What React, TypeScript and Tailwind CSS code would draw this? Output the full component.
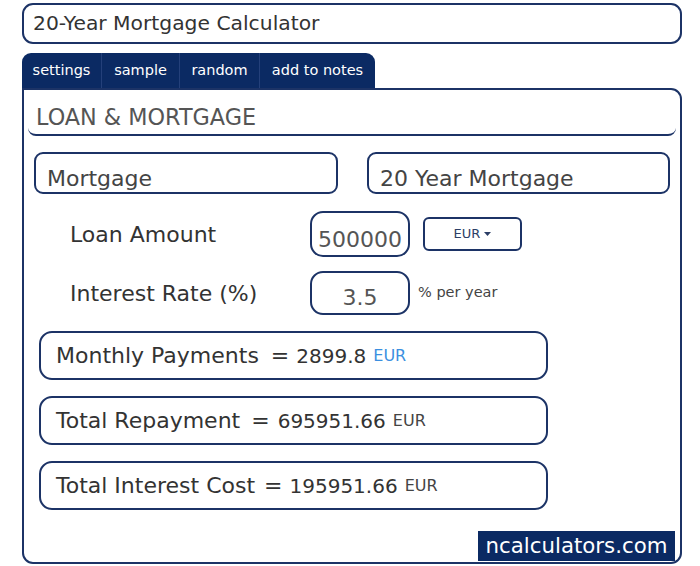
import React from "react";

const navy = "border-[#1c3366]";

function Result({ label, value, eurClass, gap }: { label: string; value: string; eurClass: string; gap: string }) {
  return (
    <div className={`w-[509px] h-[49px] border-2 ${navy} rounded-[13px] flex items-center pl-[15px] text-[22px] text-[#333]`}>
      <span>{label}</span>
      <span className={gap}>=</span>
      <span className="text-[20px]">{value}</span>
      <span className={`ml-[7px] text-[16px] ${eurClass}`}>EUR</span>
    </div>
  );
}

export default function App() {
  return (
    <div className="w-[700px] h-[566px] bg-white pt-[3px] pl-[22px] font-['DejaVu_Sans',sans-serif] text-[#444]">
      <div className={`w-[660px] h-[41px] border-2 ${navy} rounded-[11px] flex items-center pl-[9px] text-[20.3px] text-[#333]`}>
        20-Year Mortgage Calculator
      </div>
      <div className="mt-[9px] w-[353px] h-[35px] bg-[#0b2a63] rounded-t-[9px] flex text-white text-[14.5px]">
        <span className="w-[80px] border-r border-[#24407a] flex items-center justify-center">settings</span>
        <span className="w-[78px] border-r border-[#24407a] flex items-center justify-center">sample</span>
        <span className="w-[80px] border-r border-[#24407a] flex items-center justify-center">random</span>
        <span className="w-[115px] flex items-center justify-center">add to notes</span>
      </div>
      <div className={`w-[660px] h-[476px] border-2 ${navy} rounded-b-[11px] rounded-tr-[11px] px-[4px] pt-[14px] flex flex-col`}>
        <div className={`border-b-2 ${navy} rounded-b-[8px] w-[648px] pl-[8px] pb-[3px] text-[22.3px] text-[#555] leading-[27px]`}>LOAN &amp; MORTGAGE</div>
        <div className="flex mt-[16px] pl-[6px] gap-[29px]">
          <div className={`w-[304px] h-[42px] border-2 ${navy} rounded-[9px] flex items-end pl-[11px] text-[22px] leading-[27px] text-[#444]`}>Mortgage</div>
          <div className={`w-[303px] h-[42px] border-2 ${navy} rounded-[9px] flex items-end pl-[11px] text-[22px] leading-[27px] text-[#444]`}>20 Year Mortgage</div>
        </div>
        <div className="flex items-center mt-[17px]">
          <div className="w-[282px] pl-[42px] text-[22px] text-[#333]">Loan Amount</div>
          <div className={`w-[100px] h-[46px] border-2 ${navy} rounded-[13px] flex items-end justify-center text-[22px] leading-[30px] text-[#555]`}>500000</div>
          <div className={`ml-[13px] w-[99px] h-[34px] border-2 ${navy} rounded-[6px] flex items-center justify-center text-[13px] text-[#2c3e66]`}>
            EUR
            <svg width="7" height="4" viewBox="0 0 7 4" className="ml-[4px]"><path d="M0 0h7L3.5 4z" fill="#2c3e66" /></svg>
          </div>
        </div>
        <div className="flex items-center mt-[14px]">
          <div className="w-[282px] pl-[42px] text-[22px] text-[#333]">Interest Rate (%)</div>
          <div className={`w-[100px] h-[44px] border-2 ${navy} rounded-[13px] flex items-end justify-center text-[22px] leading-[30px] text-[#555]`}>3.5</div>
          <div className="ml-[8px] text-[14.5px] text-[#444]">% per year</div>
        </div>
        <div className="flex flex-col gap-[16px] mt-[16px] pl-[11px]">
          <Result label="Monthly Payments" value="2899.8" eurClass="text-[#3b8fe0]" gap="ml-[12px] mr-[7px]" />
          <Result label="Total Repayment" value="695951.66" eurClass="text-[#444]" gap="ml-[11px] mr-[8px]" />
          <Result label="Total Interest Cost" value="195951.66" eurClass="text-[#444]" gap="ml-[9px] mr-[7px]" />
        </div>
        <div className="mt-auto mb-[1px] self-end mr-[1px] w-[197px] h-[30px] bg-[#0b2a63] text-white text-[21.3px] flex items-center justify-center">ncalculators.com</div>
      </div>
    </div>
  );
}
